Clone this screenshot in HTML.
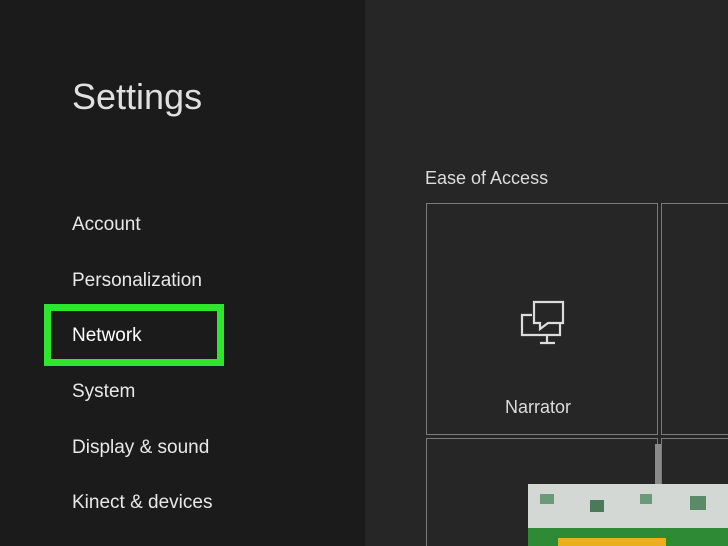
<!DOCTYPE html>
<html><head><meta charset="utf-8"><style>
html,body{margin:0;width:728px;height:546px;overflow:hidden}
body{background:#262626;font-family:"Liberation Sans",sans-serif;position:relative}
.left{position:absolute;left:0;top:0;width:365px;height:546px;background:#1b1b1b}
.t{position:absolute;color:#e6e6e6}
.item{position:absolute;left:72px;font-size:19px;color:#e8e8e8}
.box{position:absolute;left:44px;top:304px;width:166px;height:48px;border:7px solid #2ee62e}
.tile{position:absolute;border:1px solid #7a7a7a;background:#262626}
</style></head><body>
<div class="left"></div>
<div class="t" style="left:72px;top:76px;font-size:36px;color:#e0e0e0">Settings</div>
<div class="item" style="top:214px">Account</div>
<div class="item" style="top:270px">Personalization</div>
<div class="box"></div>
<div class="item" style="top:325px;color:#fff">Network</div>
<div class="item" style="top:381px">System</div>
<div class="item" style="top:437px">Display &amp; sound</div>
<div class="item" style="top:492px">Kinect &amp; devices</div>
<div class="t" style="left:425px;top:168px;font-size:18px;color:#dcdcdc">Ease of Access</div>
<div class="tile" style="left:426px;top:203px;width:230px;height:230px"></div>
<div class="tile" style="left:661px;top:203px;width:80px;height:230px"></div>
<div class="tile" style="left:426px;top:438px;width:230px;height:120px"></div>
<div class="tile" style="left:661px;top:438px;width:80px;height:120px"></div>
<svg style="position:absolute;left:510px;top:292px" width="64" height="60" viewBox="0 0 64 60" fill="none" stroke="#dcdcdc" stroke-width="2.2">
<path d="M22 23H12V43H50V31"/>
<path d="M24 10H53V31H38L30 37V31H24Z"/>
<path d="M37 43V50M30 51H45"/>
</svg>
<div class="t" style="left:505px;top:397px;font-size:18px;color:#dcdcdc">Narrator</div>
<div style="position:absolute;left:655px;top:444px;width:6px;height:40px;background:#8a8a8a"></div>
<div style="position:absolute;left:528px;top:484px;width:200px;height:44px;background:#d4d8d4"></div>
<div style="position:absolute;left:540px;top:494px;width:14px;height:10px;background:#6a9a78"></div>
<div style="position:absolute;left:590px;top:500px;width:14px;height:12px;background:#4a7a5a"></div>
<div style="position:absolute;left:640px;top:494px;width:12px;height:10px;background:#6a9a78"></div>
<div style="position:absolute;left:690px;top:496px;width:16px;height:14px;background:#5a8a68"></div>
<div style="position:absolute;left:528px;top:528px;width:200px;height:18px;background:#2e8a35"></div>
<div style="position:absolute;left:558px;top:538px;width:108px;height:8px;background:#e8b020"></div>
</body></html>
